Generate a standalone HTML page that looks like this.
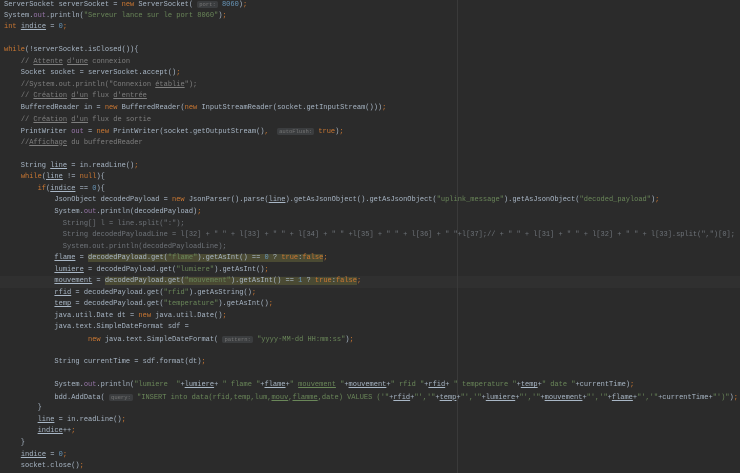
<!DOCTYPE html>
<html><head><meta charset="utf-8"><style>
html,body{margin:0;padding:0;background:#2b2b2b;width:740px;height:473px;overflow:hidden}
#ed{position:relative;width:740px;height:473px;font-family:"Liberation Mono",monospace;font-size:7px;color:#a9b7c6}
.l{position:absolute;left:4px;white-space:pre;height:11.55px;line-height:11.55px}
.k{color:#cc7832}.s{color:#6a8759}.c{color:#7f7f7f}.f{color:#9876aa}.n{color:#6897bb}
.u{text-decoration:underline}
.h{background:#3b3d3f;color:#777;font-size:5.5px;border-radius:2px;padding:0 2px}
.d{color:#6f747a}
.hl{background:#4a4a33}
#guide{position:absolute;left:457px;top:0;width:1px;height:473px;background:#3a3a3a}
#cur{position:absolute;left:0;top:276px;width:740px;height:12px;background:#303030}
</style></head><body><div id="ed">
<div id="cur"></div><div id="guide"></div>
<div class="l" style="top:-1px">ServerSocket serverSocket = <span class="k">new</span> ServerSocket( <span class="h">port:</span> <span class="n">8060</span>)<span class="k">;</span></div>
<div class="l" style="top:10.5px">System.<span class="f">out</span>.println(<span class="s">"Serveur lance sur le port 8060"</span>)<span class="k">;</span></div>
<div class="l" style="top:22px"><span class="k">int</span> <span class="u">indice</span> = <span class="n">0</span><span class="k">;</span></div>
<div class="l" style="top:45.2px"><span class="k">while</span>(!serverSocket.isClosed()){</div>
<div class="l" style="top:56.8px">    <span class="c">// <span class="u">Attente</span> <span class="u">d'une</span> connexion</span></div>
<div class="l" style="top:68.3px">    Socket socket = serverSocket.accept()<span class="k">;</span></div>
<div class="l" style="top:79.9px">    <span class="c">//System.out.println("Connexion <span class="u">établie</span>");</span></div>
<div class="l" style="top:91.4px">    <span class="c">// <span class="u">Création</span> <span class="u">d'un</span> flux <span class="u">d'entrée</span></span></div>
<div class="l" style="top:103px">    BufferedReader in = <span class="k">new</span> BufferedReader(<span class="k">new</span> InputStreamReader(socket.getInputStream()))<span class="k">;</span></div>
<div class="l" style="top:114.5px">    <span class="c">// <span class="u">Création</span> <span class="u">d'un</span> flux de sortie</span></div>
<div class="l" style="top:126.1px">    PrintWriter <span class="f">out</span> = <span class="k">new</span> PrintWriter(socket.getOutputStream()<span class="k">,</span>  <span class="h">autoFlush:</span> <span class="k">true</span>)<span class="k">;</span></div>
<div class="l" style="top:137.6px">    <span class="c">//<span class="u">Affichage</span> du bufferedReader</span></div>
<div class="l" style="top:160.7px">    String <span class="u">line</span> = in.readLine()<span class="k">;</span></div>
<div class="l" style="top:172.3px">    <span class="k">while</span>(<span class="u">line</span> != <span class="k">null</span>){</div>
<div class="l" style="top:183.8px">        <span class="k">if</span>(<span class="u">indice</span> == <span class="n">0</span>){</div>
<div class="l" style="top:195.4px">            JsonObject decodedPayload = <span class="k">new</span> JsonParser().parse(<span class="u">line</span>).getAsJsonObject().getAsJsonObject(<span class="s">"uplink_message"</span>).getAsJsonObject(<span class="s">"decoded_payload"</span>)<span class="k">;</span></div>
<div class="l" style="top:206.9px">            System.<span class="f">out</span>.println(decodedPayload)<span class="k">;</span></div>
<div class="l d" style="top:218.5px">              String[] l = line.split(":");</div>
<div class="l d" style="top:230px">              String decodedPayloadLine = l[32] + " " + l[33] + " " + l[34] + " " +l[35] + " " + l[36] + " "+l[37];// + " " + l[31] + " " + l[32] + " " + l[33].split(",")[0];</div>
<div class="l d" style="top:241.6px">              System.out.println(decodedPayloadLine);</div>
<div class="l" style="top:253.1px">            <span class="u">flame</span> = <span class="hl">decodedPayload.get(<span class="s">"flame"</span>).getAsInt() == <span class="n">0</span> ? <span class="k">true</span>:<span class="k">false</span></span><span class="k">;</span></div>
<div class="l" style="top:264.7px">            <span class="u">lumiere</span> = decodedPayload.get(<span class="s">"lumiere"</span>).getAsInt()<span class="k">;</span></div>
<div class="l" style="top:276.2px">            <span class="u">mouvement</span> = <span class="hl">decodedPayload.get(<span class="s">"mouvement"</span>).getAsInt() == <span class="n">1</span> ? <span class="k">true</span>:<span class="k">false</span></span><span class="k">;</span></div>
<div class="l" style="top:287.8px">            <span class="u">rfid</span> = decodedPayload.get(<span class="s">"rfid"</span>).getAsString()<span class="k">;</span></div>
<div class="l" style="top:299.3px">            <span class="u">temp</span> = decodedPayload.get(<span class="s">"temperature"</span>).getAsInt()<span class="k">;</span></div>
<div class="l" style="top:310.9px">            java.util.Date dt = <span class="k">new</span> java.util.Date()<span class="k">;</span></div>
<div class="l" style="top:322.4px">            java.text.SimpleDateFormat sdf =</div>
<div class="l" style="top:334px">                    <span class="k">new</span> java.text.SimpleDateFormat( <span class="h">pattern:</span> <span class="s">"yyyy-MM-dd HH:mm:ss"</span>)<span class="k">;</span></div>
<div class="l" style="top:357.1px">            String currentTime = sdf.format(dt)<span class="k">;</span></div>
<div class="l" style="top:380.2px">            System.<span class="f">out</span>.println(<span class="s">"lumiere  "</span>+<span class="u">lumiere</span>+ <span class="s">" flame "</span>+<span class="u">flame</span>+<span class="s">" <span class="u">mouvement</span> "</span>+<span class="u">mouvement</span>+<span class="s">" rfid "</span>+<span class="u">rfid</span>+ <span class="s">" temperature "</span>+<span class="u">temp</span>+<span class="s">" date "</span>+currentTime)<span class="k">;</span></div>
<div class="l" style="top:391.8px">            bdd.AddData( <span class="h">query:</span> <span class="s">"INSERT into data(rfid,temp,lum,<span class="u">mouv</span>,<span class="u">flamme</span>,date) VALUES ('"</span>+<span class="u">rfid</span>+<span class="s">"','"</span>+<span class="u">temp</span>+<span class="s">"','"</span>+<span class="u">lumiere</span>+<span class="s">"','"</span>+<span class="u">mouvement</span>+<span class="s">"','"</span>+<span class="u">flame</span>+<span class="s">"','"</span>+currentTime+<span class="s">"')"</span>)<span class="k">;</span></div>
<div class="l" style="top:403.3px">        }</div>
<div class="l" style="top:414.9px">        <span class="u">line</span> = in.readLine()<span class="k">;</span></div>
<div class="l" style="top:426.4px">        <span class="u">indice</span>++<span class="k">;</span></div>
<div class="l" style="top:438px">    }</div>
<div class="l" style="top:449.5px">    <span class="u">indice</span> = <span class="n">0</span><span class="k">;</span></div>
<div class="l" style="top:461.1px">    socket.close()<span class="k">;</span></div>
</div></body></html>
